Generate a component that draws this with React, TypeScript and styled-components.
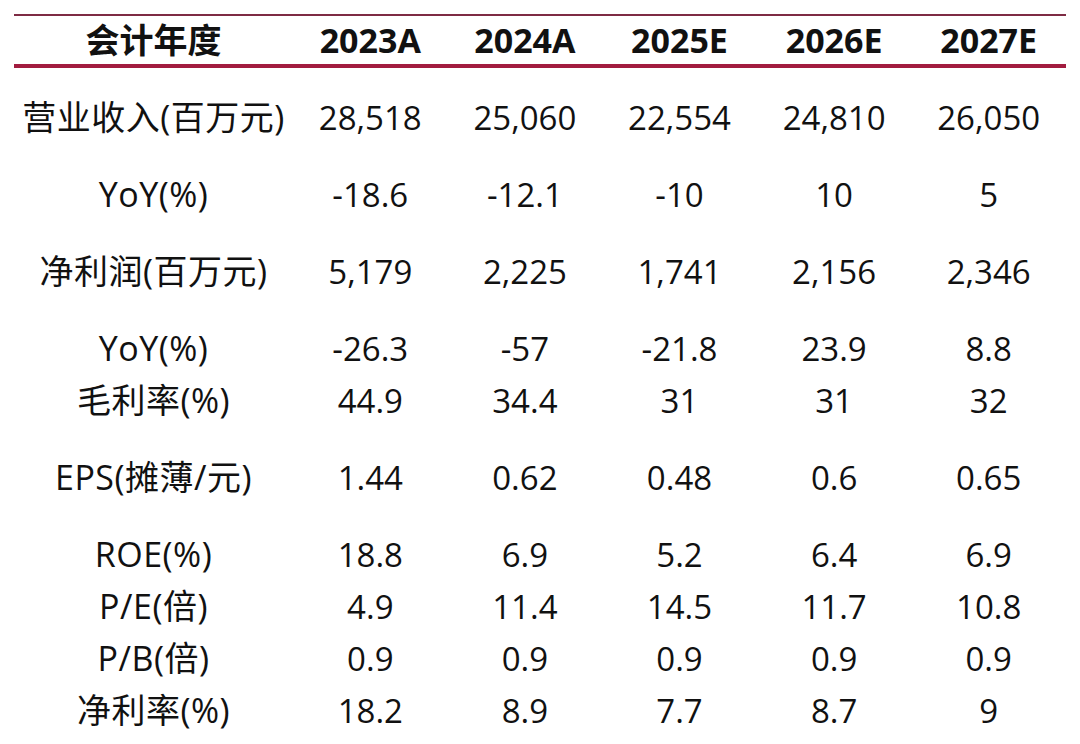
import React from 'react';
import styled, { createGlobalStyle } from 'styled-components';

const GlobalStyle = createGlobalStyle`
  html, body {
    margin: 0;
    padding: 0;
    background: #ffffff;
  }
  body {
    font-family: "Open Sans", "Noto Sans CJK SC", sans-serif;
    color: #111111;
  }
`;

const Table = styled.div`
  width: 1052px;
  margin: 14px 0 0 14px;
`;

const HeaderRow = styled.div`
  display: grid;
  grid-template-columns: 279px repeat(5, 1fr);
  align-items: center;
  height: 48px;
  border-top: 2px solid #7e2b44;
  border-bottom: 4px solid #a21c3f;
  font-size: 34px;
  font-weight: 700;
`;

const Row = styled.div<{ $gap: boolean }>`
  display: grid;
  grid-template-columns: 279px repeat(5, 1fr);
  align-items: center;
  height: 52px;
  padding-bottom: 4px;
  box-sizing: border-box;
  margin-top: ${p => (p.$gap ? '25px' : '0')};
  font-size: 33px;
  font-weight: 400;
`;

const Cell = styled.div<{ $label?: boolean }>`
  text-align: center;
  white-space: nowrap;
  line-height: 1;
  font-size: ${p => (p.$label ? '34px' : 'inherit')};
  letter-spacing: ${p => (p.$label ? '0.5px' : '0')};
`;

const columns = ['2023A', '2024A', '2025E', '2026E', '2027E'];

const rows: { label: string; values: string[]; gap: boolean }[] = [
  { label: '营业收入(百万元)', values: ['28,518', '25,060', '22,554', '24,810', '26,050'], gap: true },
  { label: 'YoY(%)', values: ['-18.6', '-12.1', '-10', '10', '5'], gap: true },
  { label: '净利润(百万元)', values: ['5,179', '2,225', '1,741', '2,156', '2,346'], gap: true },
  { label: 'YoY(%)', values: ['-26.3', '-57', '-21.8', '23.9', '8.8'], gap: true },
  { label: '毛利率(%)', values: ['44.9', '34.4', '31', '31', '32'], gap: false },
  { label: 'EPS(摊薄/元)', values: ['1.44', '0.62', '0.48', '0.6', '0.65'], gap: true },
  { label: 'ROE(%)', values: ['18.8', '6.9', '5.2', '6.4', '6.9'], gap: true },
  { label: 'P/E(倍)', values: ['4.9', '11.4', '14.5', '11.7', '10.8'], gap: false },
  { label: 'P/B(倍)', values: ['0.9', '0.9', '0.9', '0.9', '0.9'], gap: false },
  { label: '净利率(%)', values: ['18.2', '8.9', '7.7', '8.7', '9'], gap: false },
];

export default function App() {
  return (
    <>
      <GlobalStyle />
      <Table>
        <HeaderRow>
          <Cell>会计年度</Cell>
          {columns.map(c => (
            <Cell key={c}>{c}</Cell>
          ))}
        </HeaderRow>
        {rows.map((r, i) => (
          <Row key={i} $gap={r.gap}>
            <Cell $label>{r.label}</Cell>
            {r.values.map((v, j) => (
              <Cell key={j}>{v}</Cell>
            ))}
          </Row>
        ))}
      </Table>
    </>
  );
}
